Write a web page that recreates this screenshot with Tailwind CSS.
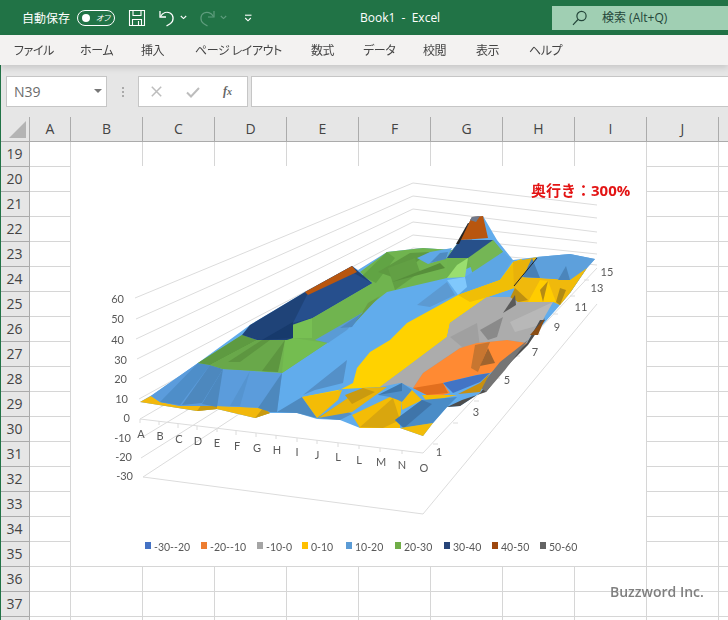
<!DOCTYPE html>
<html lang="ja">
<head>
<meta charset="utf-8">
<script src="https://cdn.jsdelivr.net/npm/@tailwindcss/browser@4"></script>
<title>Book1 - Excel</title>
</head>
<body class="m-0 w-[728px] h-[620px] overflow-hidden bg-white font-['Open_Sans','Noto_Sans_CJK_JP',sans-serif]">
<div class="relative w-[728px] h-[620px] overflow-hidden flex flex-col">

  <!-- Title bar -->
  <header class="h-[35px] shrink-0 bg-[#217346] flex items-center text-white relative">
    <span class="ml-[22px] text-[12px] w-[49px] whitespace-nowrap font-['Noto_Sans_CJK_JP',sans-serif]">自動保存</span>
    <span class="ml-[6px] w-[38px] h-[16px] rounded-full border border-white flex items-center justify-between pl-[4px] pr-[4px]">
      <span class="w-[8px] h-[8px] rounded-full bg-white"></span>
      <span class="text-[8px] leading-none font-['Noto_Sans_CJK_JP',sans-serif] italic [font-feature-settings:'palt']">オフ</span>
    </span>
    <svg class="ml-[13px]" width="18" height="18" viewBox="0 0 18 18" fill="none" stroke="#fff" stroke-width="1.1"><path d="M1.500 1.500h15v15h-15z"/><path d="M5 1.500v5h8v-5M4.500 16.500v-6h9v6M10.500 12v4.500"/></svg>
    <svg class="ml-[12px]" width="18" height="18" viewBox="0 0 18 18" fill="none" stroke="#fff" stroke-width="1.3"><path d="M2 2v6h6"/><path d="M2.500 7.500C5 3.500 9 2.500 12 4c4 2 4 8 .5 10.500l-4 2.500"/></svg>
    <svg class="ml-[4px]" width="7" height="5" viewBox="0 0 7 5" fill="none" stroke="#fff" stroke-width="1.1"><path d="M.8 1l2.700 2.600L6.200 1"/></svg>
    <svg class="ml-[11px]" width="18" height="18" viewBox="0 0 18 18" fill="none" stroke="#5f9d7e" stroke-width="1.2"><path d="M16 2v6h-6"/><path d="M15.500 7.500C13 3.500 9 2.500 6 4c-4 2-4 8-.5 10.500l4 2.500"/></svg>
    <svg class="ml-[4px]" width="7" height="5" viewBox="0 0 7 5" fill="none" stroke="#5f9d7e" stroke-width="1.1"><path d="M.8 1l2.700 2.600L6.200 1"/></svg>
    <svg class="ml-[17px]" width="8" height="8" viewBox="0 0 8 8" fill="none" stroke="#fff" stroke-width="1.1"><path d="M1 1.200h6.500"/><path d="M1.200 4l2.800 2.800L6.800 4"/></svg>
    <span class="absolute left-[360px] top-[9px] text-[12px] leading-[17px] whitespace-pre">Book1  -  Excel</span>
    <div class="absolute left-[552px] top-[6px] w-[176px] h-[24px] bg-[#a0cfb3] flex items-center text-[#24463a]">
      <svg class="ml-[20px]" width="16" height="16" viewBox="0 0 16 16" fill="none" stroke="#24463a" stroke-width="1.2"><circle cx="9.500" cy="6" r="4.600"/><path d="M6 9.500 1 14.800"/></svg>
      <span class="ml-[14px] text-[12px] whitespace-nowrap">検索 (Alt+Q)</span>
    </div>
  </header>

  <!-- Ribbon tabs -->
  <nav class="h-[30px] shrink-0 bg-[#f3f2f1] text-[12px] text-[#444] tracking-[-0.4px] relative z-10 shadow-[0_3px_6px_rgba(0,0,0,0.13)] font-['Noto_Sans_CJK_JP',sans-serif] [font-feature-settings:'palt'] *:absolute *:top-[6px] *:whitespace-nowrap">
    <span class="left-[14px]">ファイル</span>
    <span class="left-[80px]">ホーム</span>
    <span class="left-[141px]">挿入</span>
    <span class="left-[195px]">ページ レイアウト</span>
    <span class="left-[311px]">数式</span>
    <span class="left-[363px]">データ</span>
    <span class="left-[423px]">校閲</span>
    <span class="left-[476px]">表示</span>
    <span class="left-[529px]">ヘルプ</span>
  </nav>

  <!-- Formula bar -->
  <div class="h-[52px] shrink-0 bg-[#e6e6e6] flex items-start pt-[11px] pl-[6px]">
    <div class="w-[101px] h-[31px] bg-white border border-[#c6c6c6] flex items-center pl-[7px] text-[14px] text-[#6b6b6b] relative">
      N39
      <span class="absolute right-[4px] top-[12px] w-0 h-0 border-x-[4px] border-x-transparent border-t-[4px] border-t-[#777]"></span>
    </div>
    <div class="w-[31px] h-[31px] flex flex-col items-center justify-center gap-[2px]">
      <span class="w-[2px] h-[2px] bg-[#aaa]"></span><span class="w-[2px] h-[2px] bg-[#aaa]"></span><span class="w-[2px] h-[2px] bg-[#aaa]"></span>
    </div>
    <div class="w-[110px] h-[31px] bg-white border border-[#c6c6c6] flex items-center relative">
      <svg class="absolute left-[12px] top-[9px]" width="11" height="11" viewBox="0 0 11 11" fill="none" stroke="#bdbdbd" stroke-width="1.5"><path d="M.8.800l9.400 9.400M10.200.800.800 10.200"/></svg>
      <svg class="absolute left-[47px] top-[10px]" width="14" height="11" viewBox="0 0 14 11" fill="none" stroke="#bdbdbd" stroke-width="2"><path d="M1 5.500l4 4 8-8.500"/></svg>
      <span class="absolute left-[84px] top-[5px] text-[12px] leading-[18px] italic font-bold text-[#666] font-['Liberation_Serif',serif]">f<span class="text-[10px]">x</span></span>
    </div>
    <div class="ml-[3px] flex-1 h-[31px] bg-white border border-[#c6c6c6] border-r-0"></div>
  </div>

  <!-- Column headers -->
  <div class="h-[25px] shrink-0 bg-[#e6e6e6] flex text-[14px] text-[#444] border-b border-[#ababab]">
    <div class="w-[30px] shrink-0 relative border-r border-[#ababab]">
      <span class="absolute right-[3px] bottom-[3px] w-0 h-0 border-l-[17px] border-l-transparent border-b-[17px] border-b-[#b4b4b4]"></span>
    </div>
    <div class="w-[41px] shrink-0 text-center leading-[24px] border-r border-[#ababab]">A</div>
    <div class="w-[72px] shrink-0 text-center leading-[24px] border-r border-[#ababab]">B</div>
    <div class="w-[72px] shrink-0 text-center leading-[24px] border-r border-[#ababab]">C</div>
    <div class="w-[72px] shrink-0 text-center leading-[24px] border-r border-[#ababab]">D</div>
    <div class="w-[72px] shrink-0 text-center leading-[24px] border-r border-[#ababab]">E</div>
    <div class="w-[72px] shrink-0 text-center leading-[24px] border-r border-[#ababab]">F</div>
    <div class="w-[72px] shrink-0 text-center leading-[24px] border-r border-[#ababab]">G</div>
    <div class="w-[72px] shrink-0 text-center leading-[24px] border-r border-[#ababab]">H</div>
    <div class="w-[72px] shrink-0 text-center leading-[24px] border-r border-[#ababab]">I</div>
    <div class="w-[72px] shrink-0 text-center leading-[24px] border-r border-[#ababab]">J</div>
    <div class="flex-1"></div>
  </div>

  <!-- Sheet -->
  <div class="flex flex-1 min-h-0 relative">
    <div class="w-[30px] shrink-0 bg-[#e6e6e6] text-[14px] text-[#444] grid auto-rows-[25px] *:text-center *:leading-[24px] *:border-r *:border-b *:border-[#ababab] content-start">
      <div>19</div><div>20</div><div>21</div><div>22</div><div>23</div><div>24</div><div>25</div><div>26</div><div>27</div><div>28</div><div>29</div><div>30</div><div>31</div><div>32</div><div>33</div><div>34</div><div>35</div><div>36</div><div>37</div><div></div>
    </div>
    <div class="flex-1 grid grid-cols-[41px_repeat(9,72px)_72px] auto-rows-[25px] content-start *:border-r *:border-b *:border-[#d6d6d6]">
      <div></div><div></div><div></div><div></div><div></div><div></div><div></div><div></div><div></div><div></div><div></div>
      <div></div><div></div><div></div><div></div><div></div><div></div><div></div><div></div><div></div><div></div><div></div>
      <div></div><div></div><div></div><div></div><div></div><div></div><div></div><div></div><div></div><div></div><div></div>
      <div></div><div></div><div></div><div></div><div></div><div></div><div></div><div></div><div></div><div></div><div></div>
      <div></div><div></div><div></div><div></div><div></div><div></div><div></div><div></div><div></div><div></div><div></div>
      <div></div><div></div><div></div><div></div><div></div><div></div><div></div><div></div><div></div><div></div><div></div>
      <div></div><div></div><div></div><div></div><div></div><div></div><div></div><div></div><div></div><div></div><div></div>
      <div></div><div></div><div></div><div></div><div></div><div></div><div></div><div></div><div></div><div></div><div></div>
      <div></div><div></div><div></div><div></div><div></div><div></div><div></div><div></div><div></div><div></div><div></div>
      <div></div><div></div><div></div><div></div><div></div><div></div><div></div><div></div><div></div><div></div><div></div>
      <div></div><div></div><div></div><div></div><div></div><div></div><div></div><div></div><div></div><div></div><div></div>
      <div></div><div></div><div></div><div></div><div></div><div></div><div></div><div></div><div></div><div></div><div></div>
      <div></div><div></div><div></div><div></div><div></div><div></div><div></div><div></div><div></div><div></div><div></div>
      <div></div><div></div><div></div><div></div><div></div><div></div><div></div><div></div><div></div><div></div><div></div>
      <div></div><div></div><div></div><div></div><div></div><div></div><div></div><div></div><div></div><div></div><div></div>
      <div></div><div></div><div></div><div></div><div></div><div></div><div></div><div></div><div></div><div></div><div></div>
      <div></div><div></div><div></div><div></div><div></div><div></div><div></div><div></div><div></div><div></div><div></div>
      <div></div><div></div><div></div><div></div><div></div><div></div><div></div><div></div><div></div><div></div><div></div>
      <div></div><div></div><div></div><div></div><div></div><div></div><div></div><div></div><div></div><div></div><div></div>
      <div></div><div></div><div></div><div></div><div></div><div></div><div></div><div></div><div></div><div></div><div></div>
    </div>
  </div>

  <!-- Window edge -->
  <div class="absolute left-0 top-0 w-[1px] h-full bg-[#217346]"></div>

  <!-- Chart (canvas coordinates = page coordinates) -->
  <svg class="absolute left-0 top-0 will-change-transform" width="728" height="620" viewBox="0 0 728 620">
    <rect x="71" y="166" width="575" height="400" fill="#fff"/>
    <!-- gridlines -->
    <g fill="none" stroke="#dcdcdc" stroke-width="1">
      <path d="M135 298 413 183 597 205"/>
      <path d="M136 319 413 196 597 218"/>
      <path d="M136 339 413 209 597 232"/>
      <path d="M137 359 413 222 597 243"/>
      <path d="M139 379 413 235 597 254"/>
      <path d="M139 399 413 248 597 265"/>
      <path d="M140 419 413 261"/>
      <path d="M141 438 413 274"/>
      <path d="M141 458 413 287"/>
      <path d="M143 477 413 300"/>
      <path d="M143 477 423 514 597 304"/>
      <path d="M140 419 423 453 597 268"/>
      <path d="M433 444l5 0M453 423l5 0M474 401l5 0M495 378l5 0M515 356l5 0M535 334l5 0M553 314l5 0M570 296l5 0M584 280l5 0"/>
      <path d="M140 419v4M159 421v4M178 424v4M197 426v4M217 428v4M236 431v4M256 433v4M276 435v4M297 438v4M317 440v4M338 443v4M359 445v4M380 448v4M402 450v4"/>
    </g>
    <g class="blur-[0.5px]">
    <!-- surface: base silhouette in the 10-20 blue -->
    <polygon fill="#61acec" points="140,402 152,395 198,363 250,325 305,292 352,266 358,270 387,252 423,248 452,250 460,240 472,217 483,216 497,240 513,260 537,257 570,254 595,259 587,268 570,293 560,305 527,343 500,367 480,393 460,406 447,407 433,423 423,436 400,428 360,428 340,420 317,419 297,413 270,413 255,418 217,409 197,411"/>

    <!-- front-left yellow strip -->
    <polygon fill="#f2b80c" points="140,402 151,396 160,402 180,406 217,406 263,408 270,413 255,418 217,409 197,411"/>
    <polygon fill="#c99a10" points="197,411 202,404 217,406 217,409"/>
    <polygon fill="#c99a10" points="255,418 263,408 270,413"/>

    <!-- left blue band -->
    <polygon fill="#5b9cdc" points="151,396 198,363 210,365 223,369 282,373 277,412 263,408 217,406 180,406 160,402"/>
    <polygon fill="#4e8ec9" points="160,402 198,363 210,365 180,405"/>
    <polygon fill="#4d88be" points="182,405 210,365 223,369 202,403"/>
    <polygon fill="#4d88be" points="202,404 223,369 217,407"/>
    <polygon fill="#5594d0" points="230,406 250,371 240,406"/>
    <polygon fill="#4d88bd" points="258,408 282,373 277,412 270,412"/>

    <!-- lower-middle shading in the bright blue -->
    <polygon fill="#4e8ac0" points="277,412 302,397 317,418 297,413"/>
    <polygon fill="#5490c8" points="303,395 347,360 343,383 315,390"/>
    <polygon fill="#5490c8" points="317,418 340,420 352,414 336,407"/>

    <!-- green band -->
    <polygon fill="#70b44f" points="198,363 242,335 257,340 293,338 292,325 312,318 372,283 360,272 387,252 423,248 452,250 447,258 447,278 387,292 373,303 327,343 282,373 223,369 210,365"/>
    <polygon fill="#5e9a41" points="198,363 242,335 257,340 210,365"/>
    <polygon fill="#69a84a" points="210,365 257,340 285,340 277,372 223,369"/>
    <polygon fill="#5d9640" points="228,362 262,340 270,340 240,362"/>
    <polygon fill="#5d9640" points="262,371 285,340 278,372"/>
    <polygon fill="#74bd50" points="282,373 285,340 293,338 327,343"/>
    <polygon fill="#78c053" points="293,338 292,325 312,318 312,338"/>
    <polygon fill="#61a444" points="362,276 387,252 395,258 376,283"/>
    <polygon fill="#5e9a41" points="378,272 410,253 430,252 395,278"/>
    <polygon fill="#699f46" points="362,313 368,303 380,296 350,328"/>
    <polygon fill="#62a044" points="388,268 415,258 420,272 395,290"/>
    <polygon fill="#578f3b" points="392,282 440,263 445,268"/>
    <!-- blue patch inside green, left -->
    <polygon fill="#5a9bd5" points="315,340 362,313 347,330 328,343"/>
    <polygon fill="#4f8ac0" points="340,328 362,313 352,327"/>
    <!-- blue patch inside green, near peak -->
    <polygon fill="#5fa8e6" points="417,258 430,252 452,248 447,258 428,264"/>
    <polygon fill="#4f8bc0" points="430,263 440,253 448,252 446,259"/>

    <!-- left navy cap -->
    <polygon fill="#1f4378" points="242,335 250,325 305,292 352,266 372,283 312,318 292,325 293,338 287,340 257,340"/>
    <polygon fill="#264f8d" points="293,323 307,295 352,272 372,283 312,318"/>
    <polygon fill="#173a6c" points="262,340 293,322 293,338"/>
    <polygon fill="#b8560f" points="305,292 352,266 357,272 308,295"/>

    <!-- peak -->
    <polygon fill="#6fb34f" points="447,258 447,278 503,252 493,240 460,240"/>
    <polygon fill="#74b655" points="468,258 493,240 503,252 473,275"/>
    <polygon fill="#9ade6f" points="447,278 457,265 468,258 465,277"/>
    <polygon fill="#27508a" points="447,258 460,240 493,240 468,258"/>
    <polygon fill="#5790c8" points="465,240 473,232 472,240"/>
    <polygon fill="#b8560f" points="460,240 472,217 483,216 488,238 475,239"/>
    <polygon fill="#70798b" points="470,220 472,217 480,216 476,222"/>
    <polygon fill="#232323" points="456,244 468,223 469,223 459,244"/>

    <!-- bright blue right of the peak -->
    <polygon fill="#5da6e4" points="447,280 465,277 503,252 512,260 500,280 458,295"/>
    <polygon fill="#80c8fc" points="447,280 465,277 467,287 458,295"/>
    <polygon fill="#5c9ad2" points="417,305 447,282 455,295 430,307"/>

    <!-- main yellow band -->
    <polygon fill="#ffd200" points="353,383 357,368 370,352 390,340 407,323 458,295 500,280 513,262 522,259 514,288 487,297 450,323 447,337 403,370 380,387 343,389 302,397 330,395"/>
    <polygon fill="#f0be06" points="458,295 500,280 514,262 522,259 514,288 488,297 470,302"/>
    <polygon fill="#e9b20a" points="513,262 537,257 522,277 514,288"/>

    <!-- right gold -->
    <polygon fill="#f0b90c" points="514,288 522,277 540,278 570,280 570,293 560,305 553,302 517,302"/>
    <polygon fill="#ffcc00" points="528,302 540,280 548,281 556,302"/>
    <polygon fill="#bd8f12" points="510,298 515,288 528,300 519,302"/>
    <polygon fill="#b58b14" points="540,290 548,281 543,302"/>
    <polygon fill="#b08a16" points="556,302 560,288 566,290 560,305"/>

    <!-- right blue -->
    <polygon fill="#5da0dc" points="537,257 570,254 595,259 587,268 570,293 570,280 540,278 522,277"/>
    <polygon fill="#4880b6" points="532,258 540,278 523,277"/>
    <polygon fill="#4b85bb" points="566,266 570,280 558,280"/>
    <polygon fill="#f2bc09" points="570,280 587,268 570,293"/>
    <polyline fill="none" stroke="#222" stroke-width="1" points="514,286 537,258"/>

    <!-- grey band -->
    <polygon fill="#acacac" points="380,387 403,370 447,337 450,323 487,297 510,297 517,302 553,302 540,320 527,343 507,340 477,343 460,348 423,373 413,388 400,383"/>
    <polygon fill="#a0a0a0" points="450,337 477,323 480,347 462,347"/>
    <polygon fill="#8a8a8a" points="480,330 503,317 497,337 488,340"/>
    <polygon fill="#5a5a5a" points="503,313 515,295 516,305"/>
    <polygon fill="#b8b8b8" points="510,322 553,302 540,325 515,332"/>

    <!-- orange band -->
    <polygon fill="#ff8a33" points="413,388 423,373 460,348 477,343 507,340 527,343 500,367 490,373 477,375 443,383 450,393 443,395 427,395"/>
    <polygon fill="#c87630" points="475,345 490,342 478,372 471,368"/>
    <polygon fill="#a0642e" points="480,366 488,348 495,363"/>
    <polygon fill="#e26f1e" points="413,388 443,383 448,393 427,395"/>

    <!-- low blue -->
    <polygon fill="#4274c5" points="443,383 477,375 490,373 480,382 453,393"/>

    <!-- lower yellow patches -->
    <polygon fill="#f4bc06" points="302,397 342,390 338,400 317,418"/>
    <polygon fill="#e9b30a" points="318,418 363,388 387,387 352,412"/>
    <polygon fill="#c99a10" points="345,395 363,388 375,392 352,404"/>
    <polygon fill="#f4bc06" points="352,415 390,397 402,400 400,420 400,428 360,428"/>
    <polygon fill="#d9a60e" points="360,427 393,398 400,420 383,428"/>
    <polygon fill="#4f90cc" points="378,395 402,383 412,390 402,402 398,400 390,397"/>
    <polygon fill="#3f78ad" points="378,395 402,383 402,391"/>
    <polygon fill="#f4bc06" points="402,402 412,390 422,400 402,410"/>
    <polygon fill="#f4bc06" points="422,395 443,395 457,395 427,402"/>

    <!-- low-right blue patch -->
    <polygon fill="#4a8cc7" points="395,420 422,400 457,397 447,407 433,423 403,428"/>
    <polygon fill="#3f75aa" points="395,420 422,400 432,404 404,428"/>
    <polygon fill="#f2bc09" points="400,428 433,423 423,436"/>

    <!-- dark rim on the low-right edge -->
    <polygon fill="#4d4d4d" points="447,407 460,406 480,393 500,367 527,343 540,320 545,320 528,345 505,368 486,392 462,400"/>
    <polygon fill="#757575" points="480,387 500,362 528,340 505,370 486,392"/>
    <polygon fill="#c89010" points="458,394 480,383 490,373 480,392"/>
    <polygon fill="#8a4d14" points="530,335 545,318 538,335"/>
    </g>

    <!-- chart title -->
    <text x="531" y="196" fill="#e31414" font-size="15" font-weight="700" font-family="'Noto Sans CJK JP',sans-serif">奥行き：<tspan font-family="'Open Sans',sans-serif">300%</tspan></text>
    <!-- z axis -->
    <g fill="#595959" font-size="11" font-family="Lato,sans-serif" text-anchor="end">
      <text x="124" y="303">60</text><text x="124" y="323">50</text><text x="124" y="344">40</text><text x="127" y="364">30</text><text x="127" y="383">20</text><text x="128" y="403">10</text><text x="130" y="422">0</text><text x="131" y="442">-10</text><text x="132" y="461">-20</text><text x="133" y="480">-30</text>
    </g>
    <!-- x axis -->
    <g fill="#595959" font-size="11" font-family="Lato,sans-serif" text-anchor="middle">
      <text x="141" y="438">A</text><text x="160" y="440">B</text><text x="179" y="443">C</text><text x="198" y="445">D</text><text x="217" y="447">E</text><text x="237" y="450">F</text><text x="257" y="452">G</text><text x="277" y="454">H</text><text x="297" y="456">I</text><text x="317" y="459">J</text><text x="338" y="461">L</text><text x="359" y="464">L</text><text x="381" y="466">M</text><text x="402" y="469">N</text><text x="424" y="472">O</text>
    </g>
    <!-- y axis -->
    <g fill="#595959" font-size="11" font-family="Lato,sans-serif" text-anchor="middle">
      <text x="439" y="456">1</text><text x="476" y="416">3</text><text x="507" y="384">5</text><text x="535" y="356">7</text><text x="557" y="331">9</text><text x="581" y="311">11</text><text x="597" y="292">13</text><text x="607" y="276">15</text>
    </g>
    <!-- legend -->
    <g font-size="10.5" font-family="Lato,sans-serif" fill="#595959">
      <rect x="145" y="542" width="6" height="7" fill="#4472c4"/><text x="154" y="551">-30--20</text>
      <rect x="201" y="542" width="6" height="7" fill="#ed7d31"/><text x="210" y="551">-20--10</text>
      <rect x="257" y="542" width="6" height="7" fill="#a5a5a5"/><text x="266" y="551">-10-0</text>
      <rect x="302" y="542" width="6" height="7" fill="#ffc000"/><text x="311" y="551">0-10</text>
      <rect x="346" y="542" width="6" height="7" fill="#5b9bd5"/><text x="355" y="551">10-20</text>
      <rect x="395" y="542" width="6" height="7" fill="#70ad47"/><text x="404" y="551">20-30</text>
      <rect x="444" y="542" width="6" height="7" fill="#264478"/><text x="453" y="551">30-40</text>
      <rect x="492" y="542" width="6" height="7" fill="#9e480e"/><text x="501" y="551">40-50</text>
      <rect x="540" y="542" width="6" height="7" fill="#636363"/><text x="549" y="551">50-60</text>
    </g>
  </svg>

  <!-- Watermark -->
  <span class="absolute left-[610px] top-[582px] text-[14px] leading-[19px] font-semibold text-[#7f7f7f] whitespace-nowrap">Buzzword Inc.</span>
</div>
</body>
</html>
